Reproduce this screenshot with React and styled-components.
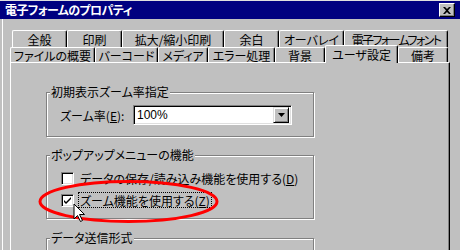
import React from "react";
import styled, { createGlobalStyle } from "styled-components";

const GlobalStyle = createGlobalStyle`
  body {
    margin: 0;
    background: #c0c0c0;
    overflow: hidden;
  }
`;

const FONT = `"Noto Sans CJK JP", "Liberation Sans", sans-serif`;

const row1 = [
  { label: "全般", w: 55 },
  { label: "印刷", w: 55 },
  { label: "拡大/縮小印刷", w: 102 },
  { label: "余白", w: 55 },
  { label: "オーバレイ", w: 65 },
  { label: "電子フォームフォント", w: 104, spacing: -1.6 },
];

const row2 = [
  { label: "ファイルの概要", w: 85 },
  { label: "バーコード", w: 63 },
  { label: "メディア", w: 50 },
  { label: "エラー処理", w: 67 },
  { label: "背景", w: 50 },
  { label: "ユーザ設定", w: 73, selected: true },
  { label: "備考", w: 50 },
];

const App = () => {
  return (
    <Window>
      <GlobalStyle />
      <TitleBar>
        <Title>電子フォームのプロパティ</Title>
        <CloseButton>
          <svg width="8" height="7" viewBox="0 0 8 7">
            <path d="M0 0h2l2 2 2-2h2L5 3.5 8 7H6L4 5 2 7H0l3-3.5z" fill="#000" />
          </svg>
        </CloseButton>
      </TitleBar>
      <Body>
        <TabRow $top>
          {row1.map((t) => (
            <Tab key={t.label} $w={t.w} $h={17} $spacing={t.spacing}>
              {t.label}
            </Tab>
          ))}
        </TabRow>
        <TabRow>
          {row2.map((t) => (
            <Tab
              key={t.label}
              $w={t.w}
              $h={t.selected ? 18 : 15}
              $selected={t.selected}
            >
              {t.label}
            </Tab>
          ))}
        </TabRow>
        <Panel>
          <Group $h={52}>
            <Legend>初期表示ズーム率指定</Legend>
            <FieldRow>
              <FieldLabel>
                ズーム率(<u>E</u>):
              </FieldLabel>
              <Combo>
                <ComboText>100%</ComboText>
                <DropButton>
                  <svg width="7" height="4" viewBox="0 0 7 4">
                    <path d="M0 0h7L3.5 4z" fill="#000" />
                  </svg>
                </DropButton>
              </Combo>
            </FieldRow>
          </Group>
          <Group $h={71} $gap={11}>
            <Legend>ポップアップメニューの機能</Legend>
            <CheckRow $gap={8}>
              <CheckBox />
              <CheckLabel>
                データの保存/読み込み機能を使用する(<u>D</u>)
              </CheckLabel>
            </CheckRow>
            <CheckRow $gap={6}>
              <CheckBox>
                <svg width="9" height="9" viewBox="0 0 9 9">
                  <path d="M1 4l2 2 5-5v2L3 8 1 6z" fill="#000" />
                </svg>
              </CheckBox>
              <CheckLabel $focused>
                ズーム機能を使用する(<u>Z</u>)
              </CheckLabel>
            </CheckRow>
          </Group>
          <Group $h={100} $gap={12}>
            <Legend>データ送信形式</Legend>
          </Group>
        </Panel>
      </Body>
      <Annotation width="460" height="250" viewBox="0 0 460 250">
        <ellipse
          cx="128.5"
          cy="200.5"
          rx="88.5"
          ry="20"
          fill="none"
          stroke="#ff0000"
          strokeWidth="3"
        />
        <path
          d="M74 203v15l3.5-3.5 3 6 2-1-3-6h5z"
          fill="#fff"
          stroke="#000"
          strokeWidth="1"
          strokeLinejoin="miter"
        />
      </Annotation>
    </Window>
  );
};

export default App;

const Window = styled.div`
  position: relative;
  width: 460px;
  height: 250px;
  overflow: hidden;
  background: #c0c0c0;
  border-top: 1px solid #dfdfdf;
  box-sizing: border-box;
  font-family: ${FONT};
  font-feature-settings: "palt";
  font-size: 12px;
  color: #000;
`;

const TitleBar = styled.div`
  height: 18px;
  background: #000080;
  display: flex;
  align-items: center;
  justify-content: space-between;
  padding: 0 5px 0 5px;
`;

const Title = styled.div`
  color: #fff;
  font-weight: bold;
  font-size: 12px;
  line-height: 18px;
  letter-spacing: -0.6px;
`;

const CloseButton = styled.div`
  width: 16px;
  height: 14px;
  box-sizing: border-box;
  background: #c0c0c0;
  border-top: 1px solid #fff;
  border-left: 1px solid #fff;
  border-right: 1px solid #000;
  border-bottom: 1px solid #000;
  box-shadow: inset -1px -1px 0 #808080;
  display: flex;
  align-items: center;
  justify-content: center;
`;

const Body = styled.div`
  margin-left: 2px;
  border-left: 1px solid #fff;
  padding: 11px 0 0 7px;
  height: 231px;
  box-sizing: border-box;
`;

const TabRow = styled.div`
  display: flex;
  align-items: flex-end;
  height: ${(p) => (p.$top ? 17 : 15)}px;
  padding-left: ${(p) => (p.$top ? 2 : 0)}px;
  position: relative;
  z-index: ${(p) => (p.$top ? 0 : 1)};
`;

const Tab = styled.div`
  flex: none;
  width: ${(p) => p.$w}px;
  height: ${(p) => p.$h}px;
  margin-bottom: ${(p) => (p.$selected ? -1 : 0)}px;
  box-sizing: border-box;
  background: #c0c0c0;
  border-top: 1px solid #fff;
  border-left: 1px solid #fff;
  border-right: 1px solid #000;
  border-radius: 2px 2px 0 0;
  box-shadow: inset -1px 0 0 #808080;
  display: flex;
  align-items: center;
  justify-content: center;
  padding-top: ${(p) => (p.$selected ? 0 : 1)}px;
  font-size: 12px;
  line-height: 14px;
  letter-spacing: ${(p) => p.$spacing || 0}px;
  white-space: nowrap;
  overflow: hidden;
  position: relative;
  z-index: ${(p) => (p.$selected ? 2 : 0)};
`;

const Panel = styled.div`
  width: 440px;
  height: 200px;
  box-sizing: border-box;
  border-top: 1px solid #fff;
  border-left: 1px solid #fff;
  border-right: 1px solid #000;
  box-shadow: inset -1px 0 0 #808080;
  padding: 22px 0 0 35px;
  position: relative;
  z-index: 0;
`;

const Group = styled.fieldset`
  margin: ${(p) => p.$gap || 0}px 0 0 0;
  padding: 0 0 0 3px;
  width: 268px;
  height: ${(p) => p.$h}px;
  box-sizing: border-box;
  border: 1px solid #808080;
  box-shadow: 1px 1px 0 #fff, inset 1px 1px 0 #fff;
  min-inline-size: 0;
`;

const Legend = styled.legend`
  padding: 0 1px;
  margin-left: 0;
  font-size: 12px;
  line-height: 14px;
  background: #c0c0c0;
  white-space: nowrap;
`;

const FieldRow = styled.div`
  display: flex;
  align-items: center;
  margin: 6px 0 0 10px;
`;

const FieldLabel = styled.div`
  width: 73px;
  white-space: nowrap;
  u {
    text-decoration: underline;
  }
`;

const Combo = styled.div`
  width: 159px;
  height: 20px;
  box-sizing: border-box;
  background: #fff;
  border-top: 1px solid #808080;
  border-left: 1px solid #808080;
  border-right: 1px solid #fff;
  border-bottom: 1px solid #fff;
  box-shadow: inset 1px 1px 0 #000, inset -1px -1px 0 #dfdfdf;
  display: flex;
  align-items: center;
  justify-content: space-between;
  padding: 0 2px 0 3px;
`;

const ComboText = styled.span`
  font-family: "Liberation Sans", sans-serif;
  font-size: 12px;
`;

const DropButton = styled.div`
  width: 16px;
  height: 16px;
  box-sizing: border-box;
  background: #c0c0c0;
  border-top: 1px solid #dfdfdf;
  border-left: 1px solid #dfdfdf;
  border-right: 1px solid #000;
  border-bottom: 1px solid #000;
  box-shadow: inset 1px 1px 0 #fff, inset -1px -1px 0 #808080;
  display: flex;
  align-items: center;
  justify-content: center;
`;

const CheckRow = styled.div`
  display: flex;
  align-items: center;
  height: 16px;
  margin: ${(p) => p.$gap}px 0 0 11px;
`;

const CheckBox = styled.div`
  flex: none;
  width: 13px;
  height: 13px;
  box-sizing: border-box;
  background: #fff;
  border-top: 1px solid #808080;
  border-left: 1px solid #808080;
  border-right: 1px solid #fff;
  border-bottom: 1px solid #fff;
  box-shadow: inset 1px 1px 0 #000, inset -1px -1px 0 #dfdfdf;
  display: flex;
  align-items: center;
  justify-content: center;
`;

const CheckLabel = styled.div`
  margin-left: 4px;
  padding: 0 1px;
  height: 16px;
  line-height: 15px;
  box-sizing: border-box;
  border: 1px dotted ${(p) => (p.$focused ? "#000" : "transparent")};
  white-space: nowrap;
`;

const Annotation = styled.svg`
  position: absolute;
  left: 0;
  top: 0;
  pointer-events: none;
`;
